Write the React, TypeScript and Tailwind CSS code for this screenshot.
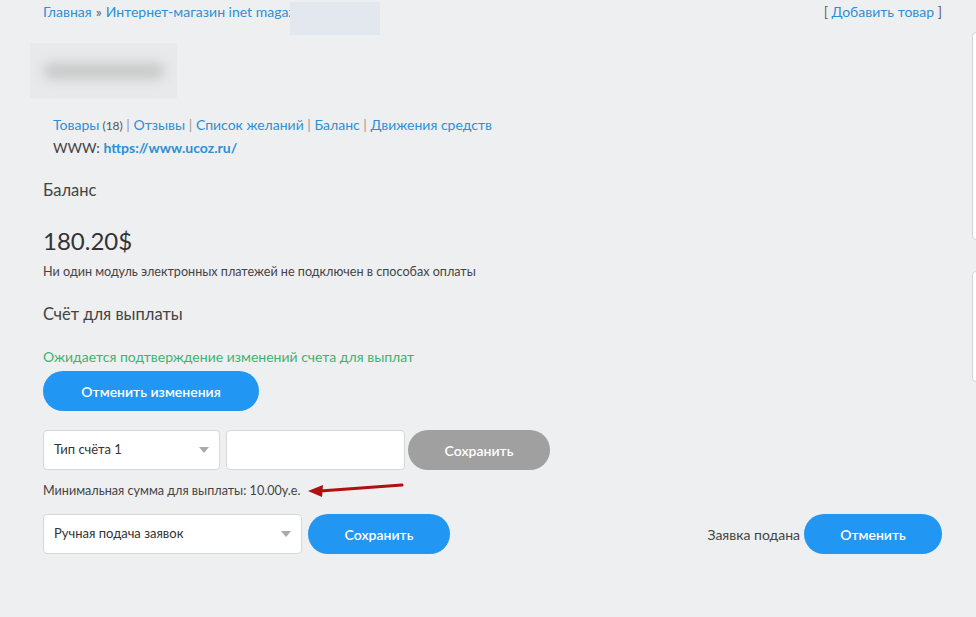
const font = { fontFamily: "Lato, 'Noto Sans', sans-serif" };

function Select({ label, width }: { label: string; width: string }) {
  return (
    <div
      className={`${width} h-10 bg-white border border-[#d8d8d8] rounded flex items-center justify-between pl-[10px] pr-[10px] text-[13px] text-[#333]`}
    >
      <span>{label}</span>
      <span className="w-0 h-0 border-l-[5px] border-r-[5px] border-t-[6px] border-l-transparent border-r-transparent border-t-[#aaa]" />
    </div>
  );
}

function Arrow() {
  return (
    <svg width="100" height="16" viewBox="0 0 100 16" className="ml-[6px] -mt-[3px]">
      <path d="M14 9 L96 3" stroke="#b01010" strokeWidth="3" strokeLinecap="round" />
      <path d="M2 9 L17 3 L16 15 Z" fill="#b01010" />
    </svg>
  );
}

export default function App() {
  return (
    <div className="relative min-h-[617px] w-[976px] bg-[#eeeff1] overflow-hidden text-[#333]" style={font}>
      {/* right side cards */}
      <div className="absolute left-[972px] top-[32px] w-[20px] h-[208px] bg-white rounded border border-[#d5d5d5]" />
      <div className="absolute left-[972px] top-[271px] w-[20px] h-[111px] bg-white rounded border border-[#d5d5d5]" />

      <div className="pl-[43px] pr-[34px] pt-[2px]">
        {/* breadcrumb */}
        <div className="flex justify-between items-center h-[20px] leading-[20px] text-[14px]">
          <div className="flex items-center relative">
            <span className="text-[#2d8fd5]">Главная</span>
            <span className="text-[#666] mx-[4px]">»</span>
            <span className="text-[#2d8fd5]">Интернет-магазин inet magaz</span>
            <div className="absolute left-[247px] top-0 w-[90px] h-[33px] bg-[#e3e8ef]" />
          </div>
          <div className="text-[14px] text-[#666]">
            [ <span className="text-[#2d8fd5]">Добавить товар</span> ]
          </div>
        </div>

        {/* blurred logo */}
        <div className="-ml-[13px] mt-[21px] w-[147px] h-[55px] bg-[#e8e9eb] flex items-center justify-center">
          <div className="w-[120px] h-[16px] bg-[#c8c8c8] rounded-full blur-[6px]" />
        </div>

        {/* links */}
        <div className="ml-[10px] mt-[16px] text-[14px] leading-[22px]">
          <div>
            <span className="text-[#2d8fd5]">Товары</span>
            <span className="text-[#555] text-[12px]"> (18)</span>
            <span className="text-[#999]"> | </span>
            <span className="text-[#2d8fd5]">Отзывы</span>
            <span className="text-[#999]"> | </span>
            <span className="text-[#2d8fd5]">Список желаний</span>
            <span className="text-[#999]"> | </span>
            <span className="text-[#2d8fd5]">Баланс</span>
            <span className="text-[#999]"> | </span>
            <span className="text-[#2d8fd5]">Движения средств</span>
          </div>
          <div className="text-[#444]">
            WWW: <span className="text-[#2d8fd5] font-bold">https://www.ucoz.ru/</span>
          </div>
        </div>

        {/* balance */}
        <div className="mt-[21px] text-[16.5px] text-[#444] leading-[20px]">Баланс</div>
        <div className="mt-[26px] text-[24px] text-[#333] leading-[30px]">180.20$</div>
        <div className="mt-[8px] text-[12.6px] text-[#444] leading-[16px]">
          Ни один модуль электронных платежей не подключен в способах оплаты
        </div>

        <div className="mt-[24px] text-[16.5px] text-[#444] leading-[20px]">Счёт для выплаты</div>

        <div className="mt-[24px] text-[14px] text-[#3cb371] leading-[18px]">
          Ожидается подтверждение изменений счета для выплат
        </div>
        <button className="mt-[5px] w-[216px] h-[40px] rounded-full bg-[#2196f3] text-white text-[14px] font-semibold">
          Отменить изменения
        </button>

        <div className="mt-[19px] flex items-center">
          <Select label="Тип счёта 1" width="w-[177px]" />
          <div className="ml-[6px] w-[179px] h-10 bg-white border border-[#d8d8d8] rounded" />
          <button className="ml-[3px] w-[142px] h-[40px] rounded-full bg-[#a0a0a0] text-white text-[14px] font-semibold">
            Сохранить
          </button>
        </div>

        <div className="mt-[12px] flex items-center text-[12.6px] text-[#444] leading-[18px]">
          <span>Минимальная сумма для выплаты: 10.00у.е.</span>
          <Arrow />
        </div>

        <div className="mt-[14px] flex items-center">
          <Select label="Ручная подача заявок" width="w-[259px]" />
          <button className="ml-[6px] w-[142px] h-[40px] rounded-full bg-[#2196f3] text-white text-[14px] font-semibold">
            Сохранить
          </button>
          <div className="flex-1" />
          <span className="text-[14px] text-[#444] mr-[4px]">Заявка подана</span>
          <button className="w-[138px] h-[40px] rounded-full bg-[#2196f3] text-white text-[14px] font-semibold">
            Отменить
          </button>
        </div>
      </div>
    </div>
  );
}
